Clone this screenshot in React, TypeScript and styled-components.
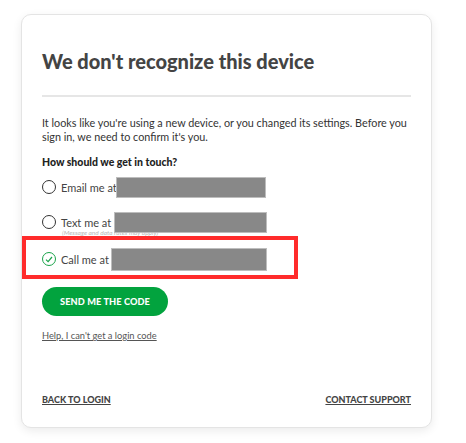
import styled, { createGlobalStyle } from "styled-components";

const GlobalStyle = createGlobalStyle`
  body {
    margin: 0;
    background: #ffffff;
    font-family: "Lato", "Liberation Sans", sans-serif;
    color: #333333;
  }
`;

const Page = styled.div`
  width: 466px;
  height: 443px;
  padding: 14px 0 0 21px;
  box-sizing: border-box;
`;

const Card = styled.div`
  position: relative;
  width: 411px;
  height: 414px;
  box-sizing: border-box;
  padding: 34px 20px 22px 20px;
  border: 1px solid #e4e4e4;
  border-radius: 10px;
  box-shadow: 0 3px 10px rgba(0, 0, 0, 0.08);
  background: #fff;
  display: flex;
  flex-direction: column;
`;

const Title = styled.h1`
  margin: 0;
  font-size: 20px;
  line-height: 24px;
  font-weight: 900;
  color: #444444;
`;

const Divider = styled.hr`
  margin: 22px 0 0 0;
  border: none;
  height: 2px;
  background: #e6e6e6;
`;

const Intro = styled.p`
  margin: 19px 0 0 0;
  font-size: 10.8px;
  line-height: 14px;
  color: #333;
`;

const Question = styled.h2`
  margin: 11px 0 0 0;
  font-size: 10.5px;
  line-height: 14px;
  font-weight: 900;
  color: #222;
`;

const Options = styled.div`
  margin-top: 8px;
  display: flex;
  flex-direction: column;
`;

const OptionGroup = styled.div<{ after: number }>`
  margin-bottom: ${(p) => p.after}px;
`;

const Option = styled.label<{ gap: number }>`
  display: flex;
  align-items: center;
  height: 20px;
  margin-bottom: ${(p) => p.gap}px;
  font-size: 11px;
  color: #444;
`;

const Radio = styled.span<{ checked?: boolean }>`
  width: 14px;
  height: 14px;
  flex: none;
  margin-right: 5px;
  border-radius: 50%;
  border: 1.3px solid ${(p) => (p.checked ? "#1aa34a" : "#333")};
  display: flex;
  align-items: center;
  justify-content: center;
  box-sizing: border-box;
`;

const Label = styled.span<{ w: number }>`
  flex: none;
  width: ${(p) => p.w}px;
  white-space: nowrap;
`;

const Redacted = styled.span<{ w: number; h: number }>`
  position: relative;
  flex: none;
  width: ${(p) => p.w}px;
  height: ${(p) => p.h}px;
  background: #888888;
  border: 1px solid #bdbdbd;
  box-sizing: border-box;
`;

const Note = styled.div`
  margin: -3px 0 0 20px;
  font-size: 6.5px;
  line-height: 8px;
  font-style: italic;
  color: #b8b8b8;
`;

const Highlight = styled.div`
  position: absolute;
  left: 0px;
  top: 221px;
  width: 276px;
  height: 43px;
  border: 4px solid #ff2b2b;
  box-sizing: border-box;
  pointer-events: none;
`;

const SendButton = styled.button`
  margin-top: 18px;
  width: 126px;
  height: 29px;
  border: none;
  border-radius: 15px;
  background: #02a33e;
  color: #fff;
  font-family: inherit;
  font-size: 9.2px;
  font-weight: 900;
  letter-spacing: 0.1px;
  cursor: pointer;
`;

const HelpLink = styled.a`
  margin-top: 14px;
  font-size: 9.3px;
  color: #555;
  text-decoration: underline;
  align-self: flex-start;
`;

const Footer = styled.div`
  margin-top: auto;
  display: flex;
  justify-content: space-between;
`;

const FooterLink = styled.a`
  font-size: 9px;
  font-weight: 900;
  color: #444;
  text-decoration: underline;
  text-transform: uppercase;
`;

const options = [
  { label: "Email me at", labelW: 55, w: 150, gap: 15, after: 0, checked: false },
  { label: "Text me at +", labelW: 53, w: 153, gap: 0, after: 12, checked: false },
  { label: "Call me at +", labelW: 50, w: 156, gap: 0, after: 0, checked: true },
];

function App() {
  return (
    <Page>
      <GlobalStyle />
      <Card>
        <Title>We don't recognize this device</Title>
        <Divider />
        <Intro>
          It looks like you're using a new device, or you changed its settings. Before you
          sign in, we need to confirm it's you.
        </Intro>
        <Question>How should we get in touch?</Question>
        <Options>
          {options.map((o) => (
            <OptionGroup key={o.label} after={o.after}>
              <Option gap={o.gap}>
                <Radio checked={o.checked}>
                  {o.checked && (
                    <svg width="8" height="7" viewBox="0 0 8 7">
                      <path d="M1 3.6 L3.1 5.6 L7 1" fill="none" stroke="#1aa34a" strokeWidth="1.2" />
                    </svg>
                  )}
                </Radio>
                <Label w={o.labelW}>{o.label}</Label>
                <Redacted w={o.w} h={o.checked ? 23 : 21} />
              </Option>
              {o.label.startsWith("Text") && <Note>(Message and data rates may apply)</Note>}
            </OptionGroup>
          ))}
        </Options>
        <SendButton>SEND ME THE CODE</SendButton>
        <HelpLink href="#">Help, I can't get a login code</HelpLink>
        <Footer>
          <FooterLink href="#">Back to login</FooterLink>
          <FooterLink href="#">Contact support</FooterLink>
        </Footer>
        <Highlight />
      </Card>
    </Page>
  );
}

export default App;
